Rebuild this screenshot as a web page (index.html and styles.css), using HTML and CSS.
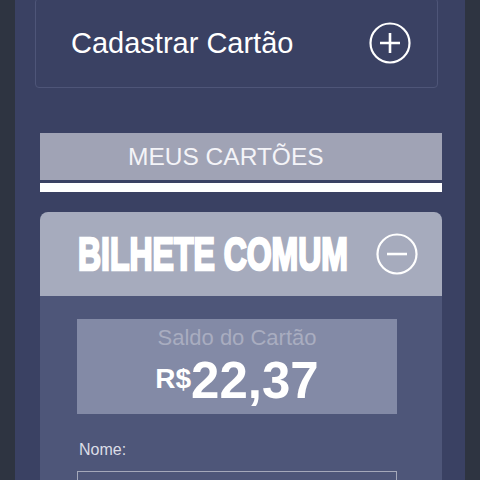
FILE: index.html
```html
<!DOCTYPE html>
<html lang="pt-BR">
<head>
  <meta charset="UTF-8">
  <meta name="viewport" content="width=device-width, initial-scale=1.0">
  <title>Meus Cartões</title>
  <link rel="stylesheet" href="styles.css">
</head>
<body>
  <div class="panel">
    <div class="add-card">
      <span class="add-card-label">Cadastrar Cartão</span>
      <svg class="icon" width="42" height="42" viewBox="0 0 42 42">
        <circle cx="21" cy="21" r="19.5" fill="none" stroke="#fff" stroke-width="2.2"/>
        <path d="M11 21H31M21 11V31" stroke="#fff" stroke-width="2.6"/>
      </svg>
    </div>

    <div class="section-title">MEUS CARTÕES</div>
    <div class="section-line"></div>

    <div class="card">
      <div class="card-header">
        <h2 class="card-title">BILHETE COMUM</h2>
        <svg class="icon" width="42" height="42" viewBox="0 0 42 42">
          <circle cx="21" cy="21" r="19.5" fill="none" stroke="#fff" stroke-width="2.2"/>
          <path d="M11 21H31" stroke="#fff" stroke-width="2.6"/>
        </svg>
      </div>
      <div class="card-body">
        <div class="balance">
          <p class="balance-label">Saldo do Cartão</p>
          <p class="balance-value"><span class="currency">R$</span>22,37</p>
        </div>
        <label class="field-label" for="nome">Nome:</label>
        <input class="field-input" id="nome" type="text">
      </div>
    </div>
  </div>
</body>
</html>
```

FILE: styles.css
```css
body {
  font-family: "Liberation Sans", Arial, sans-serif;
  margin: 0;
  padding: 0;
  background-color: #2e3441;
  overflow: hidden;
}

.panel {
  margin: 0 15px;
  min-height: 480px;
  padding: 0 23px 0 25px;
  background-color: #3a4163;
}

.add-card {
  display: flex;
  align-items: center;
  justify-content: space-between;
  height: 90px;
  margin: -2px 4px 0 -5px;
  padding: 0 26px 0 35px;
  box-sizing: border-box;
  border: 1px solid #4e5578;
  border-radius: 4px;
  color: #ffffff;
}

.add-card-label {
  font-size: 29px;
}

.icon {
  display: block;
  flex-shrink: 0;
}

.section-title {
  margin-top: 45px;
  height: 47px;
  padding-left: 88px;
  display: flex;
  align-items: center;
  background-color: #a0a3b5;
  color: #f4f4f8;
  font-size: 24.5px;
}

.section-line {
  height: 9px;
  margin-top: 3px;
  background-color: #ffffff;
}

.card {
  margin-top: 20px;
  border-radius: 8px 8px 0 0;
  overflow: hidden;
}

.card-header {
  display: flex;
  align-items: center;
  height: 84px;
  padding: 0 24px 0 38px;
  background-color: #a6abbd;
}

.card-title {
  margin: 0;
  flex: 1 1 0;
  min-width: 0;
  color: #ffffff;
  font-size: 46px;
  font-weight: bold;
  line-height: 1;
  white-space: nowrap;
  transform: scaleX(0.695);
  transform-origin: left center;
  -webkit-text-stroke: 2.6px #ffffff;
}

.card-body {
  padding: 23px 45px 20px 37px;
  min-height: 200px;
  background-color: #4e5679;
}

.balance {
  width: 320px;
  height: 95px;
  padding-top: 6px;
  box-sizing: border-box;
  background-color: #838aa6;
  text-align: center;
}

.balance p {
  margin: 0;
}

.balance-label {
  color: #a9adc0;
  font-size: 22px;
  line-height: 26px;
}

.balance-value {
  color: #ffffff;
  font-size: 51px;
  font-weight: bold;
  line-height: 55px;
}

.currency {
  font-size: 28px;
  vertical-align: 10px;
}

.field-label {
  display: block;
  margin: 26px 0 0 2px;
  color: #dcdde6;
  font-size: 16px;
  line-height: 20px;
}

.field-input {
  display: block;
  width: 320px;
  height: 40px;
  margin-top: 11px;
  box-sizing: border-box;
  border: 1.5px solid #a4a8ba;
  background-color: transparent;
}
```
